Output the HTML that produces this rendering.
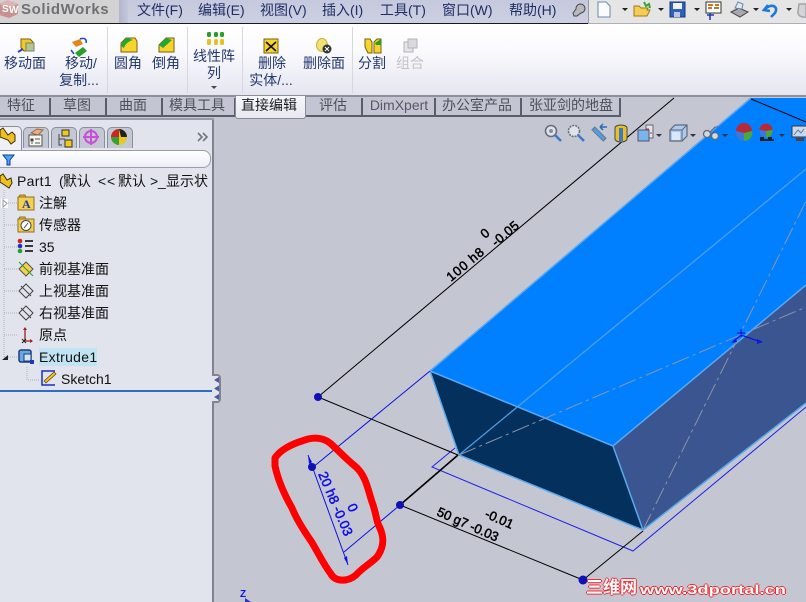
<!DOCTYPE html>
<html lang="zh">
<head>
<meta charset="utf-8">
<title>SolidWorks</title>
<style>
html,body{margin:0;padding:0;width:806px;height:602px;overflow:hidden;background:#c4c7d1}
body{position:relative;font-family:"Liberation Sans","WenQuanYi Zen Hei","Noto Sans CJK SC",sans-serif;font-size:14px}
.a{position:absolute}
.t{position:absolute;white-space:nowrap;line-height:18px}
.c{transform:translateX(-50%)}
.m{color:#1f2f66;top:0;line-height:20px;font-size:14px}
.r{color:#22386e;font-size:14px}
.tb{position:absolute;top:98px;height:19px;background:#c3c6d2;border:1px solid #5a5e68;border-width:0 2px 2px 0;box-sizing:border-box}
.tl{position:absolute;top:96px;line-height:18px;white-space:nowrap;transform:translateX(-50%);color:#4c5058;font-size:14px}
.n{color:#111;font-size:14px}
.sep{position:absolute;top:27px;width:1px;height:66px;background:#d6d8e0}
.pt{position:absolute;top:127px;height:21px;background:#c4c7d4;border:1px solid #8a8e9c;border-bottom:0;border-radius:5px 5px 0 0;box-sizing:border-box}
svg{position:absolute;overflow:visible}
</style>
</head>
<body>
<!-- viewport -->
<svg class="a" style="left:0;top:0" width="806" height="602" viewBox="0 0 806 602">
<polygon points="430,371 751,98 806,98 806,285 613,446" fill="#0080ff"/>
<polygon points="613,446 806,285 806,403 643,530" fill="#3a5590"/>
<polygon points="430,371 613,446 643,530 459,455" fill="#03305c"/>
<g fill="none" stroke="#5aa8ee" stroke-width="1.5">
<path d="M430,371 L751,98"/><path d="M430,371 L613,446 L806,285"/><path d="M613,446 L643,530"/><path d="M430,371 L459,455 L643,530 L806,403"/>
</g>
<path d="M459,455 L806,169" stroke="#4f9ce6" stroke-width="1.3"/>
<path d="M459,455 L806,307" stroke="#8a95a6" stroke-width="1" stroke-dasharray="18 4 3 4"/>
<path d="M643,530 L806,201" stroke="#8a95a6" stroke-width="1" stroke-dasharray="18 4 3 4"/>
<!-- blue sketch -->
<path d="M455,448 L432,467 L633,551 L806,407" fill="none" stroke="#2020e6" stroke-width="1"/>
<path d="M312,468 L430,371 M400,505 L344,552 M308,455 L348,565" fill="none" stroke="#1010e0" stroke-width="1"/>
<path d="M308,455 l1,9 l3,-2z M348,565 l-1,-9 l-3,2z" fill="#1010e0"/>
<!-- black dims -->
<path d="M318,397 L674,98 M318,397 L458,455 M583,580 L400,505 M583,580 L643,531 M751,99 L806,122" fill="none" stroke="#000" stroke-width="1"/>
<path d="M400,505 L458,455" stroke="#000" stroke-width="1.6"/>
<!-- dots -->
<circle cx="318" cy="397" r="4" fill="#1010b4"/><circle cx="312" cy="467" r="4" fill="#1010b4"/><circle cx="400" cy="505" r="4" fill="#1010b4"/><circle cx="583" cy="580" r="4.5" fill="#1010b4"/>
<!-- triad -->
<path d="M741,335 L733,342 M741,335 L761,342 M741,329 L741,337 M737,333 L745,333" stroke="#0a18e0" stroke-width="1.2"/>
<path d="M731,343 l5,-5 l1,4z M763,342 l-6,-3 l0,5z" fill="#0a18e0"/>
<!-- red mark -->
<path d="M275,458 C280,450 292,444 302,441 C312,437 322,437 330,443 C338,450 345,458 356,467 C366,476 368,490 372,502 C376,512 376,520 379,526 C384,536 385,546 377,557 C370,564 362,568 356,575 C348,582 335,582 331,574 C322,562 318,552 311,541 C302,528 296,518 292,508 C284,494 278,480 275,466 Z" fill="none" stroke="#ff0000" stroke-width="7" stroke-linejoin="round"/>
<!-- Z axis -->
<text x="240" y="597" font-size="10" font-weight="bold" fill="#1212ee" font-family="Liberation Sans">Z</text>
<path d="M245,598 L245,602 L251,602z" fill="#2a3ab0"/>
<!-- dim text -->
<g font-family="Liberation Sans" font-size="13" fill="#000" stroke="#000" stroke-width="0.5">
<text transform="translate(451,282) rotate(-40)" letter-spacing=".9">100 h8</text>
<text transform="translate(496,247) rotate(-40)" letter-spacing=".4">-0.05</text>
<text transform="translate(485,239) rotate(-40)">0</text>
<text transform="translate(436,515) rotate(24)">50 g7 -0.03</text>
<text transform="translate(484,517) rotate(24)">-0.01</text>
</g>
<g font-family="Liberation Sans" font-size="13.5" fill="#1010e8" stroke="#1010e8" stroke-width="0.5">
<text transform="translate(318,474) rotate(67)">20 h8 -0.03</text>
<text transform="translate(347,506) rotate(67)">0</text>
</g>
</svg>

<!-- view toolbar icons -->
<svg style="left:0;top:0" width="806" height="160">
<g fill="#dfe3ea" stroke="#6a6e7a" stroke-width="1.6"><circle cx="551" cy="131" r="5.5"/><circle cx="574" cy="131" r="5.5" stroke-dasharray="2 1"/></g>
<circle cx="551" cy="131" r="2" fill="#8a8e98"/>
<path d="M555,135 L561,141 M578,135 L584,141" stroke="#3c78c8" stroke-width="2.5"/>
<path d="M593,128 L605,140" stroke="#6a7a90" stroke-width="5"/><path d="M594,129 L604,139" stroke="#48a0e8" stroke-width="3"/><path d="M600,127 L607,127 M600,127 L603,124 M600,127 L603,130" stroke="#2c68b8" stroke-width="1.5" fill="none"/>
<path d="M615,128 a6,3 0 0 1 12,0 v11 a6,3 0 0 1 -12,0z" fill="#e8c020" stroke="#445"/><path d="M619,128 h4 v13 h-4z" fill="#3c78c8"/>
<path d="M646,125 h7 v13 h-4 v-8 h-3z" fill="#e4e4e8" stroke="#667"/><path d="M646,129 l3,0 M650,133 l2,0" stroke="#c82828"/>
<rect x="638" y="130" width="11" height="11" fill="#7ab4f0" stroke="#556"/>
<path d="M656,134 l6,0 l-3,3z" fill="#334"/>
<path d="M670,130 l5,-5 h12 v11 l-5,5 h-12z" fill="#a8ccf0" stroke="#667" stroke-width="1.2"/><path d="M670,130 h12 v11 M682,130 l5,-5" fill="none" stroke="#667"/><path d="M672,132 h8 v8 h-8z" fill="#d8e8f8"/>
<path d="M690,134 l6,0 l-3,3z M722,134 l6,0 l-3,3z M779,134 l6,0 l-3,3z" fill="#334"/>
<circle cx="707" cy="134" r="3.5" fill="#cdd" stroke="#667" stroke-width="1.3"/><circle cx="715" cy="136" r="3.5" fill="#cdd" stroke="#667" stroke-width="1.3"/><path d="M710,132 l5,-5 h4" stroke="#667" fill="none"/>
<circle cx="744" cy="133" r="8" fill="#3c78d8"/><path d="M736,131 a8,8 0 0 1 16,0 l-8,2z" fill="#b82838"/><path d="M744,133 l8,-2 a8,8 0 0 1 -8,10z" fill="#48a838"/>
<circle cx="766" cy="131" r="6.5" fill="#3c78d8"/><path d="M759.500,130 a6.500,6.500 0 0 1 13,0 l-6.500,1z" fill="#b82838"/><path d="M766,131 l6.500,-1 a6.500,6.500 0 0 1 -6.500,7.500z" fill="#48a838"/>
<path d="M760,137 h4 v2 h4 v-2 h4 v2 h2 v2 h-14z" fill="#1c2030"/>
<rect x="792" y="126" width="15" height="11" fill="#cdd8e6" stroke="#334"/><path d="M794,135 l4,-5 l3,3 l3,-4" stroke="#5080b8" fill="none"/><path d="M796,138 h8 v3 h-8z" fill="#445"/>
</svg>

<!-- top bar -->
<div class="a" style="left:0;top:0;width:119px;height:23px;background:#d3d3d3"></div>
<div class="a" style="left:119px;top:0;width:9px;height:23px;background:linear-gradient(90deg,#b4b5cc,#c5c8dc)"></div>
<div class="a" style="left:128px;top:0;width:460px;height:23px;background:linear-gradient(#c6c9dd,#cdd0e2)"></div>
<div class="a" style="left:588px;top:0;width:218px;height:23px;background:#e5e5e5;border-left:1px solid #9a9aa4;box-sizing:border-box"></div>
<div class="a" style="left:0;top:23px;width:588px;height:1px;background:#18181e"></div>
<div class="a" style="left:588px;top:23px;width:218px;height:1px;background:#aeb0b8"></div>
<svg style="left:0;top:0" width="22" height="18"><path d="M-1,4 L7,0 L18,4 V14 L9,18 L-1,15z" fill="#c89090"/><path d="M7,0 L18,4 L9,8 L-1,4z" fill="#dcb4b4"/></svg>
<div class="t" style="left:2px;top:1px;color:#fff;font-weight:bold;font-size:10px">S</div>
<div class="t" style="left:9px;top:2px;color:#fff;font-weight:bold;font-size:10px">W</div>
<div class="t" style="left:21px;top:1px;font-size:15px;font-weight:bold;letter-spacing:.6px;color:#707074">SolidWorks</div>
<div class="t m" style="left:137px">文件(F)</div>
<div class="t m" style="left:198px">编辑(E)</div>
<div class="t m" style="left:260px">视图(V)</div>
<div class="t m" style="left:322px">插入(I)</div>
<div class="t m" style="left:380px">工具(T)</div>
<div class="t m" style="left:442px">窗口(W)</div>
<div class="t m" style="left:509px">帮助(H)</div>
<svg style="left:0;top:0" width="806" height="24">
<path d="M573,13 l3,-4 a4.5,4.5 0 1 1 5,4 l-4,3 h-3z" fill="#b8b8be" stroke="#444"/>
<path d="M598,2 h8 l4,4 v11 h-12z" fill="#fbfbfd" stroke="#6a8ab4"/>
<path d="M622,8 h6 l-3,3z M658,8 h6 l-3,3z M694,8 h6 l-3,3z M753,8 h6 l-3,3z M786,8 h6 l-3,3z" fill="#222"/>
<path d="M634,16 V6 h5 l2,2 h7 l-1,2 h3 l-3,6z" fill="#f4ce50" stroke="#a07818"/><path d="M644,2 l2,4 l3,-2 l1,4" stroke="#38a838" stroke-width="2" fill="none"/>
<rect x="670" y="2" width="15" height="15" fill="#2e62b8" stroke="#143880"/><rect x="673" y="3" width="9" height="6" fill="#f2f2f6"/><rect x="674" y="12" width="6" height="5" fill="#b8c8de"/>
<rect x="706" y="2" width="15" height="11" fill="#fff" stroke="#333"/><path d="M708,5 h5 M715,5 h4 M708,8 h4 M714,8 h5" stroke="#c87818" stroke-width="2"/><path d="M707,15 h7 M710,13 v7" stroke="#2038b0" stroke-width="1.5"/>
<path d="M731,12 l8,-4 l9,4 l-8,5z" fill="#a8a8ac" stroke="#444"/><path d="M735,8 l3,-6 l5,2 l-1,5z" fill="#dce8f4" stroke="#6688aa"/>
<path d="M768,5 l-4,5 l6,1 M765,9 c6,-6 14,-3 10,4 l-4,4" fill="none" stroke="#1e78d8" stroke-width="2.6"/>
<path d="M799,4 h7 v13 h-3 a5,5 0 0 1 -5,-6z" fill="#d4d4d8" stroke="#a4a4a8" stroke-width="1.5"/>
</svg>

<!-- command manager -->
<div class="a" style="left:0;top:24px;width:806px;height:72px;background:linear-gradient(#fff 0,#fbfbfe 25px,#e4e5ef 100%)"></div>
<div class="a" style="left:0;top:95px;width:806px;height:2px;background:#8d9098"></div>
<div class="sep" style="left:107px"></div><div class="sep" style="left:187px"></div><div class="sep" style="left:242px"></div><div class="sep" style="left:352px"></div>
<svg style="left:0;top:0" width="440" height="96">
<path d="M21,39 h9 l3,3 v9 h-9 l-3,-3z" fill="#f2c828" stroke="#806010"/><rect x="26" y="43" width="8" height="8" fill="#b0c890" stroke="#808060"/><path d="M18,52 l5,-3" stroke="#2048c0" stroke-width="2"/>
<path d="M72,42 l8,-3 l3,5 l-7,3z" fill="#e88420"/><path d="M75,53 l8,-6 l4,4 l-8,6z" fill="#28a028"/><path d="M80,39 c5,-2 7,1 6,4 M71,50 l3,4" fill="none" stroke="#2048c0" stroke-width="1.5"/>
<path d="M121,52 V43 l5,-5 h9 l2,3 v11z" fill="#f6d42c" stroke="#7a6010"/><path d="M121,46 c1,-4 4,-8 7,-8 l5,2 c-4,1 -8,4 -9,8z" fill="#22a832"/>
<path d="M159,52 V45 l7,-7 h8 v14z" fill="#f6d42c" stroke="#7a6010"/><path d="M159,45 l7,-7 l6,2 l-9,8z" fill="#22a832"/>
<g fill="#28a028"><rect x="207" y="32" width="4" height="5" rx="1.500"/><rect x="214" y="32" width="4" height="5" rx="1.500"/><rect x="220" y="32" width="4" height="5" rx="1.500"/></g>
<g fill="#e8c020"><rect x="207" y="39" width="4" height="6" rx="1.500"/><rect x="214" y="39" width="4" height="6" rx="1.500"/><rect x="220" y="39" width="4" height="6" rx="1.500"/></g>
<path d="M211,86 h6 l-3,3z" fill="#445"/>
<path d="M264,39 h14 v14 h-14z" fill="#f6d42c" stroke="#7a6010"/><path d="M266,42 l10,9 M276,42 l-10,9" stroke="#111" stroke-width="1.6"/>
<ellipse cx="322" cy="45" rx="5.500" ry="6.500" fill="#f2e070" stroke="#c8b040"/><circle cx="327" cy="49" r="4.500" fill="#333"/><path d="M325,47 l4,4 M329,47 l-4,4" stroke="#fff"/>
<path d="M365,39 h5 l2,3 v11 h-4 l-3,-6z" fill="#f6d42c" stroke="#7a6010"/><path d="M374,42 l3,-3 h4 v14 h-7z" fill="#f6d42c" stroke="#7a6010"/><path d="M375,43 l6,-4 v6 h-5z" fill="#28a028"/>
<rect x="404" y="42" width="9" height="10" fill="#e6e6ea" stroke="#b4b4b8"/><rect x="408" y="39" width="9" height="9" fill="#dadade" stroke="#b4b4b8"/>
</svg>
<div class="t r c" style="left:25px;top:54px">移动面</div>
<div class="t r c" style="left:81px;top:54px">移动/</div>
<div class="t r c" style="left:79px;top:71px">复制...</div>
<div class="t r c" style="left:128px;top:54px">圆角</div>
<div class="t r c" style="left:166px;top:54px">倒角</div>
<div class="t r c" style="left:214px;top:47px">线性阵</div>
<div class="t r c" style="left:214px;top:64px">列</div>
<div class="t r c" style="left:272px;top:54px">删除</div>
<div class="t r c" style="left:271px;top:71px">实体/...</div>
<div class="t r c" style="left:324px;top:54px">删除面</div>
<div class="t r c" style="left:372px;top:54px">分割</div>
<div class="t c" style="left:410px;top:54px;color:#c4c4c8">组合</div>

<!-- tabs -->
<div class="tb" style="left:0;width:51px"></div>
<div class="tb" style="left:51px;width:56px"></div>
<div class="tb" style="left:107px;width:56px"></div>
<div class="tb" style="left:163px;width:73px"></div>
<div class="tb" style="left:306px;width:57px"></div>
<div class="tb" style="left:363px;width:73px"></div>
<div class="tb" style="left:436px;width:86px"></div>
<div class="tb" style="left:522px;width:99px"></div>
<div class="tl" style="left:21px">特征</div>
<div class="tl" style="left:77px">草图</div>
<div class="tl" style="left:133px">曲面</div>
<div class="tl" style="left:197px">模具工具</div>
<div class="tl" style="left:333px">评估</div>
<div class="tl" style="left:399px;color:#585668">DimXpert</div>
<div class="tl" style="left:477px">办公室产品</div>
<div class="tl" style="left:571px">张亚剑的地盘</div>
<div class="a" style="left:235px;top:96px;width:71px;height:23px;background:linear-gradient(#f6f7fb,#e8e9f0);border:1px solid #8a8c96;border-top:0;border-radius:0 0 3px 3px;box-sizing:border-box"></div>
<div class="tl" style="left:269px;color:#1a1c22">直接编辑</div>

<!-- left panel -->
<div class="a" style="left:0;top:118px;width:212px;height:484px;background:#e1e4ed"></div>
<div class="a" style="left:212px;top:118px;width:2px;height:484px;background:#80838e"></div>
<div class="a" style="left:0;top:118px;width:214px;height:2px;background:#9a9da8"></div>
<div class="a" style="left:0;top:390px;width:212px;height:2px;background:#2a6fc4"></div>
<!-- panel sash -->
<div class="a" style="left:212px;top:374px;width:9px;height:29px;background:#e1e4ed;border:2px solid #80838e;border-left:0;border-radius:0 4px 4px 0;box-sizing:border-box"></div>
<svg style="left:0;top:0" width="224" height="410"><path d="M219,377 l-5,3 l5,3z M219,385.500 l-5,3 l5,3z M219,394 l-5,3 l5,3z" fill="#5058a0"/></svg>
<!-- panel tabs -->
<div class="a" style="left:-4px;top:126px;width:26px;height:24px;background:#eef0f6;border:1px solid #8a8e9c;border-bottom:0;border-radius:5px 5px 0 0;box-sizing:border-box"></div>
<div class="pt" style="left:23px;width:26px"></div>
<div class="pt" style="left:51px;width:26px"></div>
<div class="pt" style="left:79px;width:26px"></div>
<div class="pt" style="left:107px;width:26px"></div>
<div class="a" style="left:-8px;top:150px;width:219px;height:18px;background:linear-gradient(#fff,#eceef5);border:1px solid #9a9da8;border-radius:8px;box-sizing:border-box"></div>
<svg style="left:0;top:0" width="224" height="410">
<path d="M0,130 l3,-2 l5,7 l4,-3 l3,3 v6 l-4,3 l-3,-4 l-8,-3z" fill="#f0c020" stroke="#3a3008"/>
<rect x="29" y="135" width="13" height="11" fill="#f6f6f0" stroke="#555"/><path d="M31,133 l6,-4 l6,1 l-5,5z" fill="#e8b088" stroke="#a06840"/><path d="M31,139 h2 v2 h-2z M35,139 h5 M31,143 h2 M35,143 h5" stroke="#555"/>
<path d="M59,134 v11 h3" fill="none" stroke="#444"/><rect x="62" y="130" width="7" height="6" fill="#f4c818" stroke="#333"/><path d="M59,139 h6" stroke="#444"/><rect x="65" y="140" width="7" height="7" fill="#f4c818" stroke="#333"/>
<circle cx="91" cy="137" r="6" fill="none" stroke="#c850d8" stroke-width="2"/><path d="M91,129 v16 M83,137 h16" stroke="#c850d8" stroke-width="2"/>
<circle cx="119" cy="137" r="8" fill="#e8c820"/><path d="M111,137 a8,8 0 0 1 8,-8 v8z" fill="#c82828"/><path d="M111,137 h8 v8 a8,8 0 0 1 -8,-8z" fill="#3ca030"/><path d="M119,129 a8,8 0 0 1 8,8 h-6z" fill="#222"/>
<path d="M198,133 l4,4 l-4,4 M203,133 l4,4 l-4,4" fill="none" stroke="#70747e" stroke-width="1.6"/>
<path d="M3,155 h11 l-4,5 v5 h-3 v-5z" fill="#48a8f0" stroke="#1038a0"/>
<!-- tree lines -->
<path d="M4,190 V357 M4,203 H18 M4,225 H18 M4,247 H18 M4,269 H18 M4,291 H18 M4,313 H18 M4,335 H18 M4,357 H18 M27,367 V380 H40" fill="none" stroke="#b0b2ba" stroke-dasharray="1 1"/>
<rect x="1" y="199" width="7" height="9" fill="#fff"/><path d="M3,200 v7 l4,-3.500z" fill="#fff" stroke="#99a"/>
<path d="M2,360 l6,-5 v5z" fill="#222"/>
<!-- tree icons -->
<path d="M0,176 l3,-2 l4,6 l4,-2 l1,5 l-3,5 l-3,-2 l-6,-4z" fill="#f0c020" stroke="#3a3008"/>
<path d="M18,198 l2,-3 h5 l1,3z" fill="#e8b838" stroke="#907020"/><rect x="18" y="197" width="16" height="13" fill="#f4d050" stroke="#907020"/>
<text x="22" y="208" font-size="12" font-weight="bold" fill="#2038a8" font-family="Liberation Serif">A</text>
<path d="M18,220 l2,-3 h5 l1,3z" fill="#e8b838" stroke="#907020"/><rect x="18" y="219" width="16" height="13" fill="#f4d050" stroke="#907020"/><circle cx="26" cy="225.500" r="5" fill="#fff" stroke="#445"/><path d="M24,228 l4,-5" stroke="#445"/>
<circle cx="20" cy="241" r="2.300" fill="#d02020"/><circle cx="20" cy="246" r="2.300" fill="#2030c0"/><circle cx="20" cy="251" r="2.300" fill="#28a028"/>
<path d="M25,241 h8 M25,246 h8 M25,251 h8" stroke="#222" stroke-width="1.800"/>
<path d="M26,262 l7,7 l-7,7 l-7,-7z" fill="#f4d050" stroke="#555"/><path d="M19,262 l14,14" stroke="#28a028"/>
<path d="M26,284 l7,7 l-7,7 l-7,-7z M21,286 l10,10" fill="none" stroke="#444"/>
<path d="M26,306 l7,7 l-7,7 l-7,-7z M21,308 l10,10" fill="none" stroke="#444"/>
<path d="M25,329 V341 H31" fill="none" stroke="#a02020" stroke-width="1.3"/><path d="M25,327 l-2,3 h4z M33,341 l-3,-2 v4z" fill="#a02020"/><path d="M22,339 l4,4 M26,339 l-4,4" stroke="#222"/>
<rect x="19" y="350" width="12" height="12" rx="2" fill="#68a8e0" stroke="#1c3c78" stroke-width="1.500"/><rect x="24" y="354" width="7" height="7" fill="#d4e4f4" stroke="#1c3c78"/><rect x="30" y="360" width="4" height="4" fill="#2038c0"/>
<path d="M55,371 H42 V385 H55" fill="none" stroke="#1830c0" stroke-width="1.500"/><path d="M44,381 L54,372 l2,2 l-10,9z" fill="#f0c020" stroke="#5a4808" stroke-width=".7"/>
</svg>
<div class="a" style="left:39px;top:348px;width:58px;height:18px;background:#c2e4f2"></div>
<div class="t n" style="left:17px;top:172px;letter-spacing:.3px">Part1</div>
<div class="t n" style="left:59px;top:172px">(</div>
<div class="t n" style="left:63px;top:172px">默认</div>
<div class="t n" style="left:98px;top:172px">&lt;</div>
<div class="t n" style="left:107px;top:172px">&lt;</div>
<div class="t n" style="left:118px;top:172px">默认</div>
<div class="t n" style="left:150px;top:172px">&gt;</div>
<div class="t n" style="left:158px;top:172px">_</div>
<div class="t n" style="left:166px;top:172px">显示状</div>
<div class="t n" style="left:39px;top:194px">注解</div>
<div class="t n" style="left:39px;top:216px">传感器</div>
<div class="t n" style="left:39px;top:238px">35</div>
<div class="t n" style="left:39px;top:260px">前视基准面</div>
<div class="t n" style="left:39px;top:282px">上视基准面</div>
<div class="t n" style="left:39px;top:304px">右视基准面</div>
<div class="t n" style="left:39px;top:326px">原点</div>
<div class="t n" style="left:39px;top:348px;letter-spacing:.3px">Extrude1</div>
<div class="t n" style="left:61px;top:370px">Sketch1</div>

<!-- watermark -->
<div class="t" style="left:586px;top:579px;font-size:17px;font-weight:bold;color:#fff;text-shadow:1px 0 0 #f02830,-1px 0 0 #f02830,0 1px 0 #f02830,0 -1px 0 #f02830">三维网</div>
<div class="t" style="left:640px;top:581px;font-size:13px;font-weight:bold;color:#fff;transform:scaleX(1.41);transform-origin:0 50%;text-shadow:.8px 0 0 #f02830,-.8px 0 0 #f02830,0 1px 0 #f02830,0 -1px 0 #f02830">www.3dportal.cn</div>
</body>
</html>
